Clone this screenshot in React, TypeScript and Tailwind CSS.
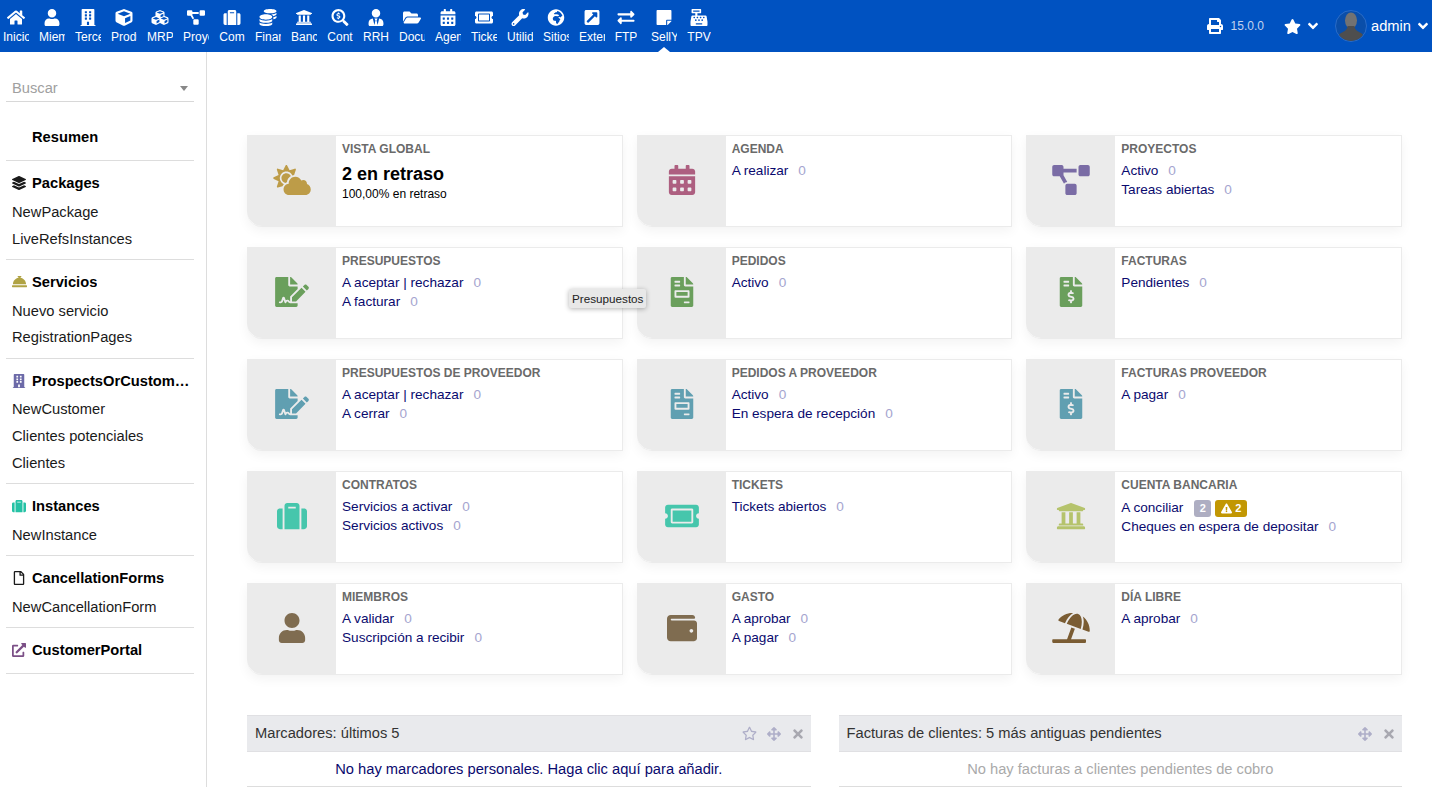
import type { ReactNode } from "react";
import type { IconType } from "react-icons";
import {
  FaAngleDown,
  FaArrowsAlt,
  FaBuilding,
  FaCalendarAlt,
  FaCashRegister,
  FaCloudSun,
  FaCoins,
  FaConciergeBell,
  FaCube,
  FaCubes,
  FaExchangeAlt,
  FaExclamationTriangle,
  FaExternalLinkAlt,
  FaExternalLinkSquareAlt,
  FaFileInvoice,
  FaFileInvoiceDollar,
  FaFileSignature,
  FaFolderOpen,
  FaGlobeAfrica,
  FaHome,
  FaLayerGroup,
  FaPrint,
  FaProjectDiagram,
  FaRegFile,
  FaRegStar,
  FaSearchDollar,
  FaStar,
  FaStickyNote,
  FaSuitcase,
  FaTicketAlt,
  FaTimes,
  FaUmbrellaBeach,
  FaUniversity,
  FaUser,
  FaUserTie,
  FaWallet,
  FaWrench,
} from "react-icons/fa";

const topMenu: { label: string; icon: IconType; width: string }[] = [
  { label: "Inicio", icon: FaHome, width: "w-[36px]" },
  { label: "Miembros", icon: FaUser, width: "w-[36px]" },
  { label: "Terceros", icon: FaBuilding, width: "w-[36px]" },
  { label: "Productos", icon: FaCube, width: "w-[36px]" },
  { label: "MRP", icon: FaCubes, width: "w-[36px]" },
  { label: "Proyectos", icon: FaProjectDiagram, width: "w-[36px]" },
  { label: "Com", icon: FaSuitcase, width: "w-[36px]" },
  { label: "Finanzas", icon: FaCoins, width: "w-[36px]" },
  { label: "Bancos", icon: FaUniversity, width: "w-[36px]" },
  { label: "Cont", icon: FaSearchDollar, width: "w-[36px]" },
  { label: "RRH", icon: FaUserTie, width: "w-[36px]" },
  { label: "Documentos", icon: FaFolderOpen, width: "w-[36px]" },
  { label: "Agenda", icon: FaCalendarAlt, width: "w-[36px]" },
  { label: "Tickets", icon: FaTicketAlt, width: "w-[36px]" },
  { label: "Utilidades", icon: FaWrench, width: "w-[36px]" },
  { label: "Sitios", icon: FaGlobeAfrica, width: "w-[36px]" },
  { label: "Externo", icon: FaExternalLinkSquareAlt, width: "w-[36px]" },
  { label: "FTP", icon: FaExchangeAlt, width: "w-[32px]" },
  { label: "SellYourSaas", icon: FaStickyNote, width: "w-[44px]" },
  { label: "TPV", icon: FaCashRegister, width: "w-[26px]" },
];

const sideMenu: { title: string; icon?: ReactNode; items: string[] }[] = [
  { title: "Resumen", items: [] },
  {
    title: "Packages",
    icon: <FaLayerGroup className="text-[14px] text-[#1a1a1a]" />,
    items: ["NewPackage", "LiveRefsInstances"],
  },
  {
    title: "Servicios",
    icon: <FaConciergeBell className="text-[15px] text-[#b0a344]" />,
    items: ["Nuevo servicio", "RegistrationPages"],
  },
  {
    title: "ProspectsOrCustomers",
    icon: <FaBuilding className="text-[14px] text-[#6c6aa8]" />,
    items: ["NewCustomer", "Clientes potenciales", "Clientes"],
  },
  {
    title: "Instances",
    icon: <FaSuitcase className="text-[14px] text-[#25c2a5]" />,
    items: ["NewInstance"],
  },
  {
    title: "CancellationForms",
    icon: <FaRegFile className="text-[14px] text-[#1a1a1a]" />,
    items: ["NewCancellationForm"],
  },
  {
    title: "CustomerPortal",
    icon: <FaExternalLinkAlt className="text-[14px] text-[#7b4f86]" />,
    items: [],
  },
];

type CardRow = { label: string; count?: string; badges?: boolean };

const cards: { title: string; icon: IconType; color: string; rows: CardRow[]; late?: boolean }[] = [
  { title: "Vista global", icon: FaCloudSun, color: "text-[#bd9c48]", rows: [], late: true },
  { title: "Agenda", icon: FaCalendarAlt, color: "text-[#ad5f80]", rows: [{ label: "A realizar", count: "0" }] },
  {
    title: "Proyectos",
    icon: FaProjectDiagram,
    color: "text-[#7a6ca5]",
    rows: [
      { label: "Activo", count: "0" },
      { label: "Tareas abiertas", count: "0" },
    ],
  },
  {
    title: "Presupuestos",
    icon: FaFileSignature,
    color: "text-[#6a9f5c]",
    rows: [
      { label: "A aceptar | rechazar", count: "0" },
      { label: "A facturar", count: "0" },
    ],
  },
  { title: "Pedidos", icon: FaFileInvoice, color: "text-[#6a9f5c]", rows: [{ label: "Activo", count: "0" }] },
  { title: "Facturas", icon: FaFileInvoiceDollar, color: "text-[#6a9f5c]", rows: [{ label: "Pendientes", count: "0" }] },
  {
    title: "Presupuestos de proveedor",
    icon: FaFileSignature,
    color: "text-[#609fb1]",
    rows: [
      { label: "A aceptar | rechazar", count: "0" },
      { label: "A cerrar", count: "0" },
    ],
  },
  {
    title: "Pedidos a proveedor",
    icon: FaFileInvoice,
    color: "text-[#609fb1]",
    rows: [
      { label: "Activo", count: "0" },
      { label: "En espera de recepción", count: "0" },
    ],
  },
  { title: "Facturas proveedor", icon: FaFileInvoiceDollar, color: "text-[#609fb1]", rows: [{ label: "A pagar", count: "0" }] },
  {
    title: "Contratos",
    icon: FaSuitcase,
    color: "text-[#46c6ac]",
    rows: [
      { label: "Servicios a activar", count: "0" },
      { label: "Servicios activos", count: "0" },
    ],
  },
  { title: "Tickets", icon: FaTicketAlt, color: "text-[#46c6ac]", rows: [{ label: "Tickets abiertos", count: "0" }] },
  {
    title: "Cuenta bancaria",
    icon: FaUniversity,
    color: "text-[#b5c36c]",
    rows: [
      { label: "A conciliar", badges: true },
      { label: "Cheques en espera de depositar", count: "0" },
    ],
  },
  {
    title: "Miembros",
    icon: FaUser,
    color: "text-[#7f6c50]",
    rows: [
      { label: "A validar", count: "0" },
      { label: "Suscripción a recibir", count: "0" },
    ],
  },
  {
    title: "Gasto",
    icon: FaWallet,
    color: "text-[#7f6c50]",
    rows: [
      { label: "A aprobar", count: "0" },
      { label: "A pagar", count: "0" },
    ],
  },
  { title: "Día libre", icon: FaUmbrellaBeach, color: "text-[#7a5c33]", rows: [{ label: "A aprobar", count: "0" }] },
];

const Avatar = () => (
  <svg viewBox="0 0 32 32" className="h-[32px] w-[32px]">
    <circle cx="16" cy="16" r="15.5" fill="#0a4ea9" stroke="#2a6cc8" />
    <clipPath id="avatar-clip">
      <circle cx="16" cy="16" r="15" />
    </clipPath>
    <g clipPath="url(#avatar-clip)">
      <ellipse cx="16" cy="10.5" rx="6" ry="8" fill="#727272" />
      <path d="M12.5 16 C12.5 20 9 21.5 6 23 C4 24 3.5 26 3.5 32 L28.5 32 C28.5 26 28 24 26 23 C23 21.5 19.5 20 19.5 16 Z" fill="#4e4e4e" />
    </g>
  </svg>
);

const TopBar = () => (
  <header className="flex h-[52px] shrink-0 items-start justify-between bg-[#0052c1] text-white">
    <nav className="-ml-[2px] flex">
      {topMenu.map((item, i) => {
        const Icon = item.icon;
        const active = item.label === "SellYourSaas";
        return (
          <div key={i} className={`relative flex h-[52px] flex-col items-center pt-[9px] ${item.width}`}>
            <Icon className="h-[17px] w-[18px] shrink-0" />
            <span className="mt-[3px] block max-w-[26px] overflow-hidden whitespace-nowrap text-[12px] leading-[16px]">
              {item.label}
            </span>
            {active && (
              <span className="absolute bottom-0 left-1/2 -ml-[6px] h-0 w-0 border-x-[6px] border-b-[5px] border-x-transparent border-b-white" />
            )}
          </div>
        );
      })}
    </nav>
    <div className="flex h-[52px] items-center">
      <FaPrint className="text-[16px]" />
      <span className="ml-[8px] text-[12px] text-[#c3d3ee]">15.0.0</span>
      <FaStar className="ml-[20px] text-[17px]" />
      <FaAngleDown className="ml-[4px] text-[16px]" />
      <span className="ml-[14px]">
        <Avatar />
      </span>
      <span className="ml-[4px] text-[14.7px]">admin</span>
      <FaAngleDown className="ml-[4px] mr-[1px] text-[16px]" />
    </div>
  </header>
);

const Sidebar = () => (
  <aside className="w-[207px] shrink-0 border-r border-[#dddddd] pl-[6px] pr-[12px] pt-[26px] text-[14.7px] leading-[20px] text-[#1a1a1a]">
    <div className="flex h-[24px] items-start justify-between border-b border-[#d8d8d8] px-[6px] text-[#a0a0a0]">
      <span>Buscar</span>
      <span className="mt-[8px] h-0 w-0 border-x-[4px] border-t-[5px] border-x-transparent border-t-[#888888]" />
    </div>
    <div className="mt-[13px]">
      {sideMenu.map((group) => (
        <div
          key={group.title}
          className={`border-b border-[#dddddd] pt-[12px] ${group.items.length > 0 ? "pb-[10.25px]" : "pb-[13px]"}`}
        >
          <div className="flex h-[20px] items-center pl-[6px] font-bold text-black">
            <span className="flex w-[20px] shrink-0 items-center">{group.icon}</span>
            <span className="block max-w-[158px] overflow-hidden text-ellipsis whitespace-nowrap">{group.title}</span>
          </div>
          {group.items.length > 0 && (
            <div className="mt-[8.75px] flex flex-col gap-[6.75px] pl-[6px]">
              {group.items.map((item) => (
                <div key={item}>{item}</div>
              ))}
            </div>
          )}
        </div>
      ))}
    </div>
  </aside>
);

const Card = ({ card }: { card: (typeof cards)[number] }) => {
  const Icon = card.icon;
  return (
    <div className="flex h-[92px] rounded-bl-[15px] border border-l-0 border-[#ebebeb] bg-white shadow-[0_4px_12px_rgba(0,0,0,0.05)]">
      <div className="flex w-[89px] shrink-0 items-center justify-center rounded-bl-[15px] bg-[#ebebeb] pb-[2px] pl-[1px]">
        <Icon className={`h-[30px] w-[38px] ${card.color}`} />
      </div>
      <div className="min-w-0 flex-1 pl-[6px] pt-[5px]">
        <div className="text-[12px] font-bold uppercase leading-[16px] text-[#6a6a6a]">{card.title}</div>
        {card.late && (
          <>
            <div className="mt-[6px] text-[18px] font-bold leading-[22px] text-black">2 en retraso</div>
            <div className="mt-[1px] text-[12px] leading-[16px] text-black">100,00% en retraso</div>
          </>
        )}
        <div className="mt-[5px]">
          {card.rows.map((row) => (
            <div
              key={row.label}
              className={`flex items-center text-[13.6px] text-[#0a0a6e] ${row.badges ? "h-[20px]" : "h-[19px]"}`}
            >
              <span>{row.label}</span>
              {row.count && <span className="ml-[10px] text-[#a5a5cf]">{row.count}</span>}
              {row.badges && (
                <span className="ml-[11px] flex gap-[4px] text-[11px] font-bold text-white">
                  <span className="flex h-[17px] w-[17px] items-center justify-center rounded-[3px] bg-[#aeaec2]">2</span>
                  <span className="flex h-[17px] w-[32px] items-center justify-center gap-[3px] rounded-[3px] bg-[#c29703]">
                    <FaExclamationTriangle className="text-[11px]" />2
                  </span>
                </span>
              )}
            </div>
          ))}
        </div>
      </div>
    </div>
  );
};

const Panel = ({ title, text, star, muted }: { title: string; text: string; star?: boolean; muted?: boolean }) => (
  <div className="flex-1">
    <div className="flex h-[37px] items-center justify-between border-y border-[#e0e0e3] bg-[#e9eaed] pl-[8px] pr-[6px] text-[14.7px] text-[#333333]">
      <span>{title}</span>
      <span className="flex items-center gap-[10px] text-[14px] text-[#aeaec8]">
        {star && <FaRegStar className="text-[15px]" />}
        <FaArrowsAlt />
        <FaTimes className="text-[#a8a8b0]" />
      </span>
    </div>
    <div className={`h-[35px] border-b border-[#dddddd] text-center text-[14.7px] leading-[35px] ${muted ? "text-[#aaaaaa]" : "text-[#0a0a6e]"}`}>
      {text}
    </div>
  </div>
);

export default function App() {
  return (
    <div className="flex h-screen flex-col overflow-hidden bg-white font-['Liberation_Sans',Arial,sans-serif]">
      <TopBar />
      <div className="flex min-h-0 flex-1">
        <Sidebar />
        <main className="relative min-w-0 flex-1 pl-[40px] pr-[30px] pt-[83px]">
          <div className="grid grid-cols-3 gap-x-[14px] gap-y-[20px]">
            {cards.map((card) => (
              <Card key={card.title} card={card} />
            ))}
          </div>
          <div className="mt-[40px] flex gap-[28px]">
            <Panel star title="Marcadores: últimos 5" text="No hay marcadores personales. Haga clic aquí para añadir." />
            <Panel muted title="Facturas de clientes: 5 más antiguas pendientes" text="No hay facturas a clientes pendientes de cobro" />
          </div>
          <div className="absolute left-[362px] top-[237px] rounded-[2px] bg-[#e8e8e8] px-[3px] text-[11.7px] leading-[19px] text-[#222222] shadow-[0_1px_5px_rgba(0,0,0,0.3)]">
            Presupuestos
          </div>
        </main>
      </div>
    </div>
  );
}
